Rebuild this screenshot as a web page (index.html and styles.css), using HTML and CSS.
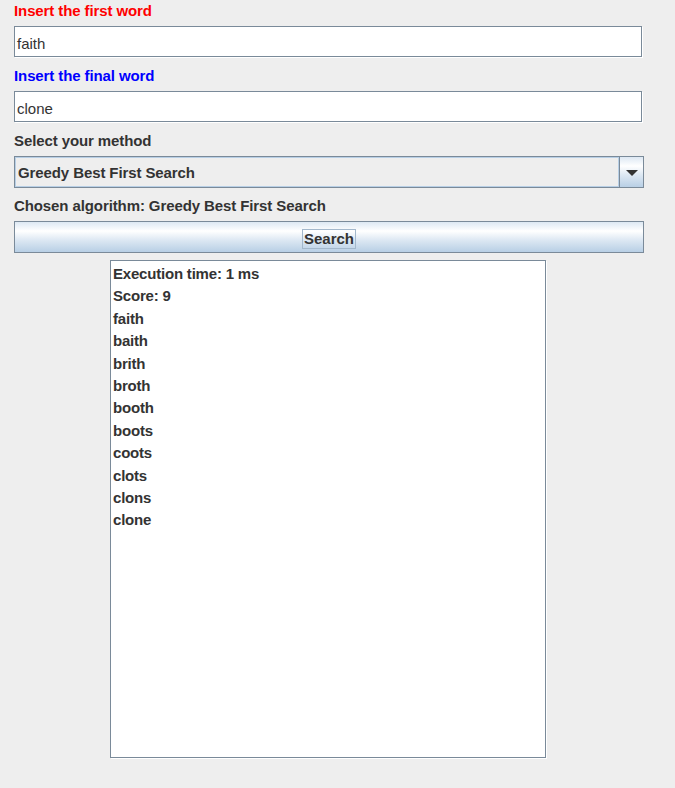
FILE: index.html
```html
<!DOCTYPE html>
<html>
<head>
<meta charset="utf-8">
<title>Word Ladder</title>
<link rel="stylesheet" href="styles.css">
</head>
<body>
<div class="panel">
  <div class="label label-red">Insert the first word</div>
  <div class="field">faith</div>
  <div class="label label-blue">Insert the final word</div>
  <div class="field">clone</div>
  <div class="label">Select your method</div>
  <div class="combo">
    <div class="combo-value">Greedy Best First Search</div>
    <div class="combo-arrow">
      <svg width="12" height="6" viewBox="0 0 12 6"><polygon points="0,0 12,0 6,6" fill="#333333"/></svg>
    </div>
  </div>
  <div class="label label-chosen">Chosen algorithm: Greedy Best First Search</div>
  <div class="button"><span class="button-text">Search</span></div>
  <div class="result">
    <div>Execution time: 1 ms</div>
    <div>Score: 9</div>
    <div>faith</div>
    <div>baith</div>
    <div>brith</div>
    <div>broth</div>
    <div>booth</div>
    <div>boots</div>
    <div>coots</div>
    <div>clots</div>
    <div>clons</div>
    <div>clone</div>
  </div>
</div>
</body>
</html>
```
FILE: styles.css
```css
html, body {
  margin: 0;
  padding: 0;
  background: #eeeeee;
}
body {
  font-family: "Liberation Sans", Arial, sans-serif;
  font-size: 15px;
  color: #333333;
  width: 675px;
  height: 788px;
  overflow: hidden;
}
.panel {
  display: flex;
  flex-direction: column;
  padding-left: 14px;
  width: 630px;
}
.label {
  font-weight: bold;
  height: 18px;
  line-height: 18px;
  margin-top: 10px;
  white-space: nowrap;
  letter-spacing: -0.1px;
}
.label-red {
  color: #ff0000;
  margin-top: 2px;
}
.label-blue {
  color: #0000ff;
}
.label-chosen {
  margin-top: 9px;
}
.field {
  box-sizing: border-box;
  margin-top: 6px;
  width: 628px;
  height: 31px;
  background: #ffffff;
  border: 1px solid #7a8a99;
  box-shadow: 1px 1px 0 #ffffff;
  padding: 8px 2px 0 2px;
  line-height: 18px;
}
.combo {
  box-sizing: border-box;
  margin-top: 6px;
  width: 630px;
  height: 32px;
  border: 1px solid #7a8a99;
  display: flex;
}
.combo-value {
  box-sizing: border-box;
  width: 604px;
  height: 30px;
  border: 1px solid #b8cfe5;
  background: #eeeeee;
  font-weight: bold;
  line-height: 18px;
  padding: 6px 2px 0 2px;
  letter-spacing: -0.1px;
}
.combo-arrow {
  box-sizing: border-box;
  flex: 1;
  border-left: 1px solid #7a8a99;
  background: linear-gradient(#dde8f3 0%, #ffffff 30%, #dde8f3 60%, #b8cfe5 100%);
  display: flex;
  justify-content: center;
  padding-top: 13px;
  padding-left: 1px;
}
.combo-arrow svg {
  display: block;
}
.button {
  box-sizing: border-box;
  margin-top: 6px;
  width: 630px;
  height: 32px;
  border: 1px solid #7a8a99;
  background: linear-gradient(#dde8f3 0%, #ffffff 30%, #dde8f3 60%, #b8cfe5 100%);
  display: flex;
  justify-content: center;
  align-items: flex-start;
  padding-top: 7px;
}
.button-text {
  display: block;
  font-weight: bold;
  line-height: 18px;
  border: 1px solid #a3b8cc;
  padding: 0 1px;
}
.result {
  box-sizing: border-box;
  margin-top: 7px;
  margin-left: 96px;
  width: 436px;
  height: 498px;
  background: #ffffff;
  border: 1px solid #7a8a99;
  box-shadow: 1px 1px 0 #ffffff;
  padding: 2px 2px 0 2px;
  font-weight: bold;
  line-height: 22.4px;
  letter-spacing: -0.2px;
}
```
